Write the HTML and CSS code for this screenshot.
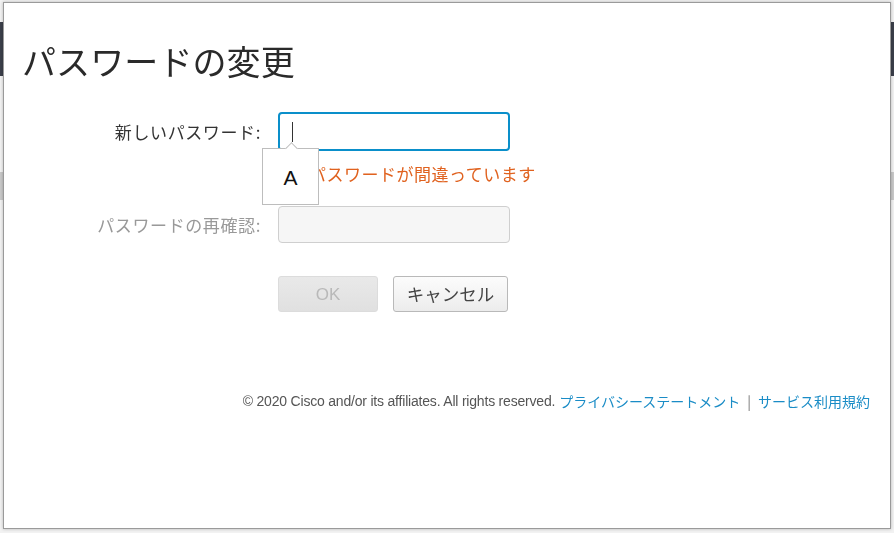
FILE: index.html
```html
<!DOCTYPE html>
<html lang="ja">
<head>
<meta charset="utf-8">
<title>パスワードの変更</title>
<link rel="stylesheet" href="styles.css">
</head>
<body>
<div class="page">
  <div class="page-header"></div>
  <div class="page-strip"></div>
</div>
<div class="modal">
  <h1 class="title">パスワードの変更</h1>
  <form class="form">
    <label class="label">新しいパスワード:</label>
    <div class="field">
      <div class="input input-focus"><span class="caret"></span></div>
      <div class="tip">A</div>
    </div>
    <div class="spacer"></div>
    <div class="error">パスワードが間違っています</div>
    <label class="label label-disabled">パスワードの再確認:</label>
    <div class="field field-second">
      <div class="input input-disabled"></div>
    </div>
    <div class="spacer"></div>
    <div class="buttons">
      <button type="button" class="btn btn-ok" disabled>OK</button>
      <button type="button" class="btn btn-cancel">キャンセル</button>
    </div>
  </form>
  <footer class="footer">
    <span class="copy">© 2020 Cisco and/or its affiliates. All rights reserved.</span>
    <a class="link" href="#">プライバシーステートメント</a>
    <span class="sep">|</span>
    <a class="link" href="#">サービス利用規約</a>
  </footer>
</div>
</body>
</html>
```
FILE: styles.css
```css
html, body {
  margin: 0;
  padding: 0;
  height: 100%;
}
body {
  background: #f2f2f2;
  font-family: "Noto Sans CJK JP", "Noto Sans", sans-serif;
  overflow: hidden;
}
.page {
  height: 100%;
  display: flex;
  flex-direction: column;
}
.page-header {
  margin-top: 22px;
  height: 54px;
  background: #3b3f4a;
}
.page-strip {
  margin-top: 96px;
  height: 28px;
  background: #c9c9c9;
}
.modal {
  position: fixed;
  left: 3px;
  top: 2px;
  width: 888px;
  height: 527px;
  box-sizing: border-box;
  background: #fff;
  border: 1px solid #9a9a9a;
  box-shadow: 0 0 3px rgba(0,0,0,0.25);
  padding: 0 20px 0 17px;
}
.title {
  margin: 34px 0 0 1px;
  font-size: 34px;
  line-height: 48px;
  font-weight: 400;
  color: #2a2a2a;
  letter-spacing: 0.1px;
}
.form {
  margin-top: 27px;
  display: grid;
  grid-template-columns: 240px 232px;
  column-gap: 17px;
  align-items: center;
}
.label {
  text-align: right;
  font-size: 17px;
  letter-spacing: 0.6px;
  color: #333;
  white-space: nowrap;
}
.label-disabled {
  color: #999;
  margin-top: 20px;
}
.field {
  position: relative;
}
.field-second {
  margin-top: 20px;
}
.input {
  box-sizing: border-box;
  border-radius: 4px;
}
.input-focus {
  height: 39px;
  border: 2px solid #0a8fca;
  background: #fff;
  position: relative;
}
.caret {
  position: absolute;
  left: 12px;
  top: 8px;
  width: 1px;
  height: 20px;
  background: #333;
}
.input-disabled {
  height: 37px;
  border: 1px solid #cfcfcf;
  background: #f6f6f6;
}
.tip {
  position: absolute;
  left: -16px;
  top: 36px;
  width: 57px;
  height: 57px;
  box-sizing: border-box;
  background: #fff;
  border: 1px solid #bdbdbd;
  display: flex;
  align-items: center;
  justify-content: center;
  padding-top: 2px;
  font-family: "Liberation Sans", Arial, sans-serif;
  font-size: 21px;
  color: #111;
  z-index: 2;
}
.tip::before {
  content: "";
  position: absolute;
  left: 24px;
  top: -5px;
  width: 8px;
  height: 8px;
  background: #fff;
  border-left: 1px solid #bdbdbd;
  border-top: 1px solid #bdbdbd;
  transform: rotate(45deg);
}
.error {
  margin-top: 11px;
  padding-left: 31px;
  font-size: 17px;
  letter-spacing: 0.5px;
  line-height: 24px;
  color: #e0621f;
  white-space: nowrap;
}
.buttons {
  margin-top: 33px;
  display: flex;
  gap: 15px;
}
.btn {
  height: 36px;
  box-sizing: border-box;
  border-radius: 3px;
  font-family: "Noto Sans CJK JP", "Liberation Sans", sans-serif;
  font-size: 17px;
  padding: 0;
  line-height: 1;
}
.btn-ok {
  width: 100px;
  border: 1px solid #dcdcdc;
  background: linear-gradient(#e9e9e9, #e0e0e0);
  color: #b9b9b9;
  font-family: "Liberation Sans", Arial, sans-serif;
}
.btn-cancel {
  width: 115px;
  border: 1px solid #b9b9b9;
  background: linear-gradient(#fcfcfc, #ececec);
  color: #444;
  font-size: 17.5px;
}
.footer {
  margin-top: 79px;
  display: flex;
  justify-content: flex-end;
  align-items: center;
  gap: 4px;
  font-size: 14px;
  line-height: 20px;
}
.copy {
  font-family: "Liberation Sans", Arial, sans-serif;
  color: #555;
  letter-spacing: -0.2px;
}
.link {
  color: #1a8cc6;
  text-decoration: none;
}
.sep {
  color: #777;
  margin: 0 3px;
}
```
